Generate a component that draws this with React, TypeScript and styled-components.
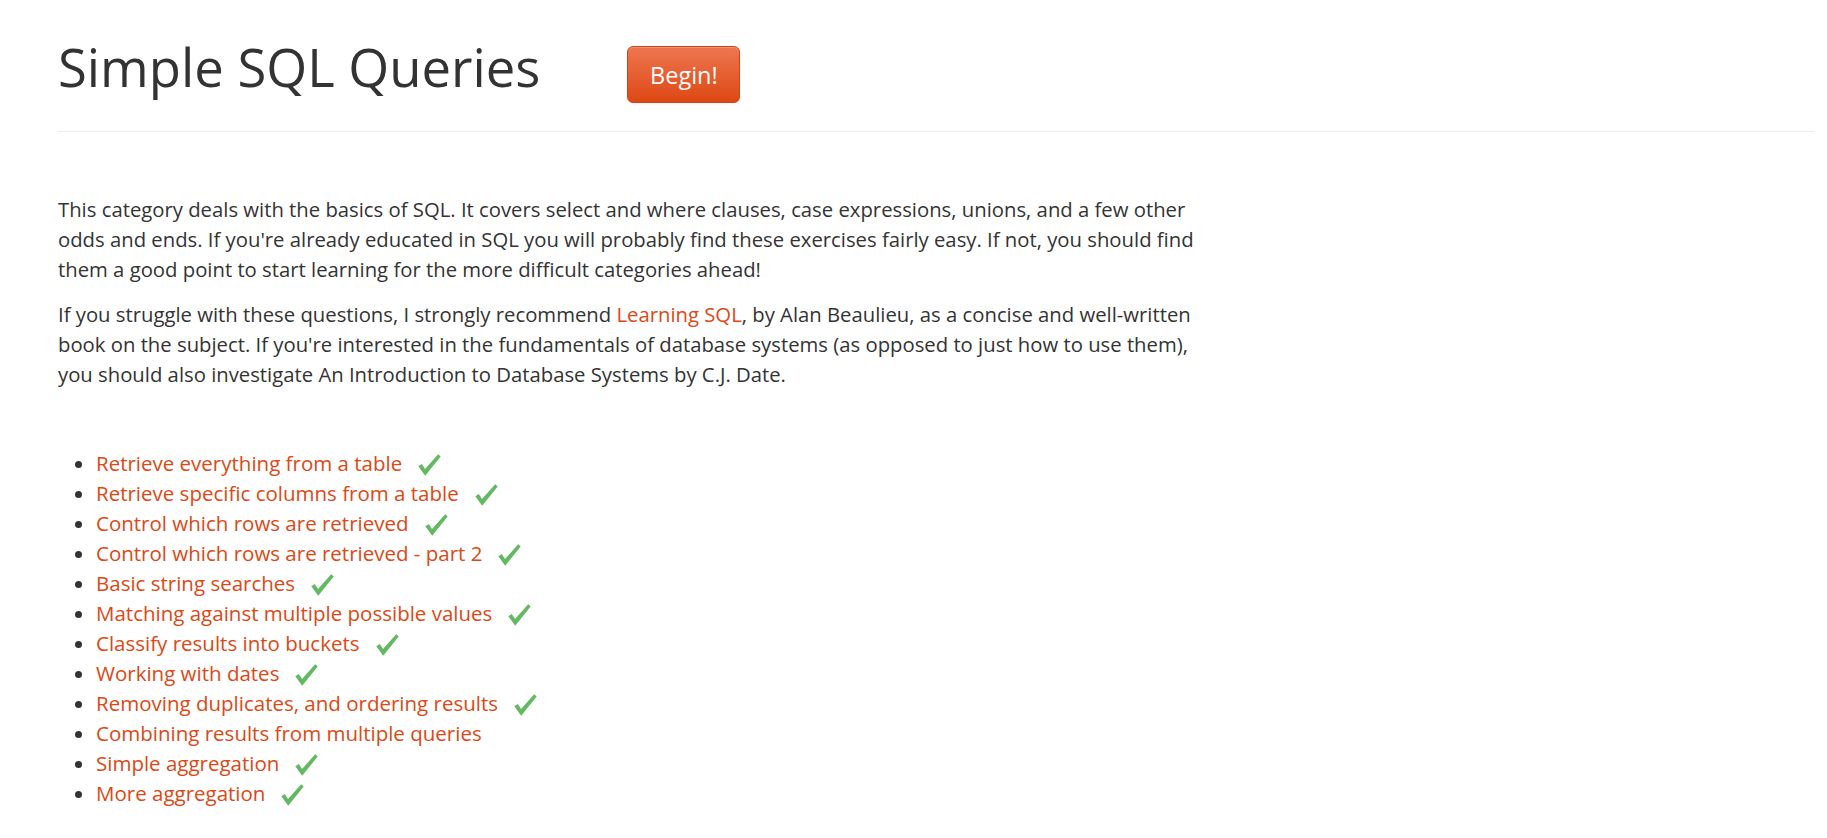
import React from "react";
import styled, { createGlobalStyle } from "styled-components";

const GlobalStyle = createGlobalStyle`
  html, body { margin: 0; padding: 0; background: #ffffff; }
  body {
    font-family: "Open Sans", "Noto Sans", sans-serif;
    color: #333333;
  }
`;

const Page = styled.div`
  padding: 0 13px 40px 58px;
`;

const Header = styled.header`
  display: flex;
  align-items: flex-start;
  height: 131px;
  border-bottom: 1px solid #eeeeee;
`;

const Title = styled.h1`
  margin: 38px 0 0;
  font-size: 52.6px;
  font-weight: 400;
  color: #333333;
  line-height: 1.1;
`;

const BeginButton = styled.button`
  margin: 46px 0 0 87px;
  width: 113px;
  height: 57px;
  border: 1px solid #c8461a;
  border-radius: 6px;
  background: linear-gradient(to bottom, #ef7650, #dd4814);
  color: #ffffff;
  font-family: inherit;
  font-size: 23.5px;
  box-shadow: inset 0 1px 0 rgba(255, 255, 255, 0.2), 0 1px 2px rgba(0, 0, 0, 0.05);
  cursor: pointer;
`;

const Intro = styled.section`
  width: 1160px;
  padding-top: 62px;
`;

const Para = styled.p`
  margin: 0 0 15px;
  font-size: 20.3px;
  line-height: 30px;
`;

const Link = styled.a`
  color: #dd4814;
  text-decoration: none;
`;

const List = styled.ul`
  margin: 59px 0 0;
  padding-left: 38px;
  font-size: 20.5px;
  line-height: 30px;
`;

const Item = styled.li`
  color: #333333;
`;

const ItemLink = styled.a`
  color: #dd4814;
  text-decoration: none;
`;

const Check = styled.svg`
  width: 23px;
  height: 22px;
  margin-left: 16px;
  vertical-align: -5px;
`;

const items: { title: string; done: boolean }[] = [
  { title: "Retrieve everything from a table", done: true },
  { title: "Retrieve specific columns from a table", done: true },
  { title: "Control which rows are retrieved", done: true },
  { title: "Control which rows are retrieved - part 2", done: true },
  { title: "Basic string searches", done: true },
  { title: "Matching against multiple possible values", done: true },
  { title: "Classify results into buckets", done: true },
  { title: "Working with dates", done: true },
  { title: "Removing duplicates, and ordering results", done: true },
  { title: "Combining results from multiple queries", done: false },
  { title: "Simple aggregation", done: true },
  { title: "More aggregation", done: true },
];

const CheckIcon = () => (
  <Check viewBox="0 0 23 22" aria-hidden="true">
    <path d="M0.3 12.2 L3.8 10 L7 15 L20.2 0.3 L22.7 2.4 L7.2 21.8 Z" fill="#62b962" />
  </Check>
);

export default function App() {
  return (
    <>
      <GlobalStyle />
      <Page>
        <Header>
          <Title>Simple SQL Queries</Title>
          <BeginButton type="button">Begin!</BeginButton>
        </Header>
        <Intro>
          <Para>
            This category deals with the basics of SQL. It covers select and where clauses, case expressions, unions, and a few other odds and ends. If you're already educated in SQL you will probably find these exercises fairly easy. If not, you should find them a good point to start learning for the more difficult categories ahead!
          </Para>
          <Para>
            If you struggle with these questions, I strongly recommend <Link href="#">Learning SQL</Link>, by Alan Beaulieu, as a concise and well-written book on the subject. If you're interested in the fundamentals of database systems (as opposed to just how to use them), you should also investigate An Introduction to Database Systems by C.J. Date.
          </Para>
        </Intro>
        <List>
          {items.map((it) => (
            <Item key={it.title}>
              <ItemLink href="#">{it.title}</ItemLink>
              {it.done && <CheckIcon />}
            </Item>
          ))}
        </List>
      </Page>
    </>
  );
}
